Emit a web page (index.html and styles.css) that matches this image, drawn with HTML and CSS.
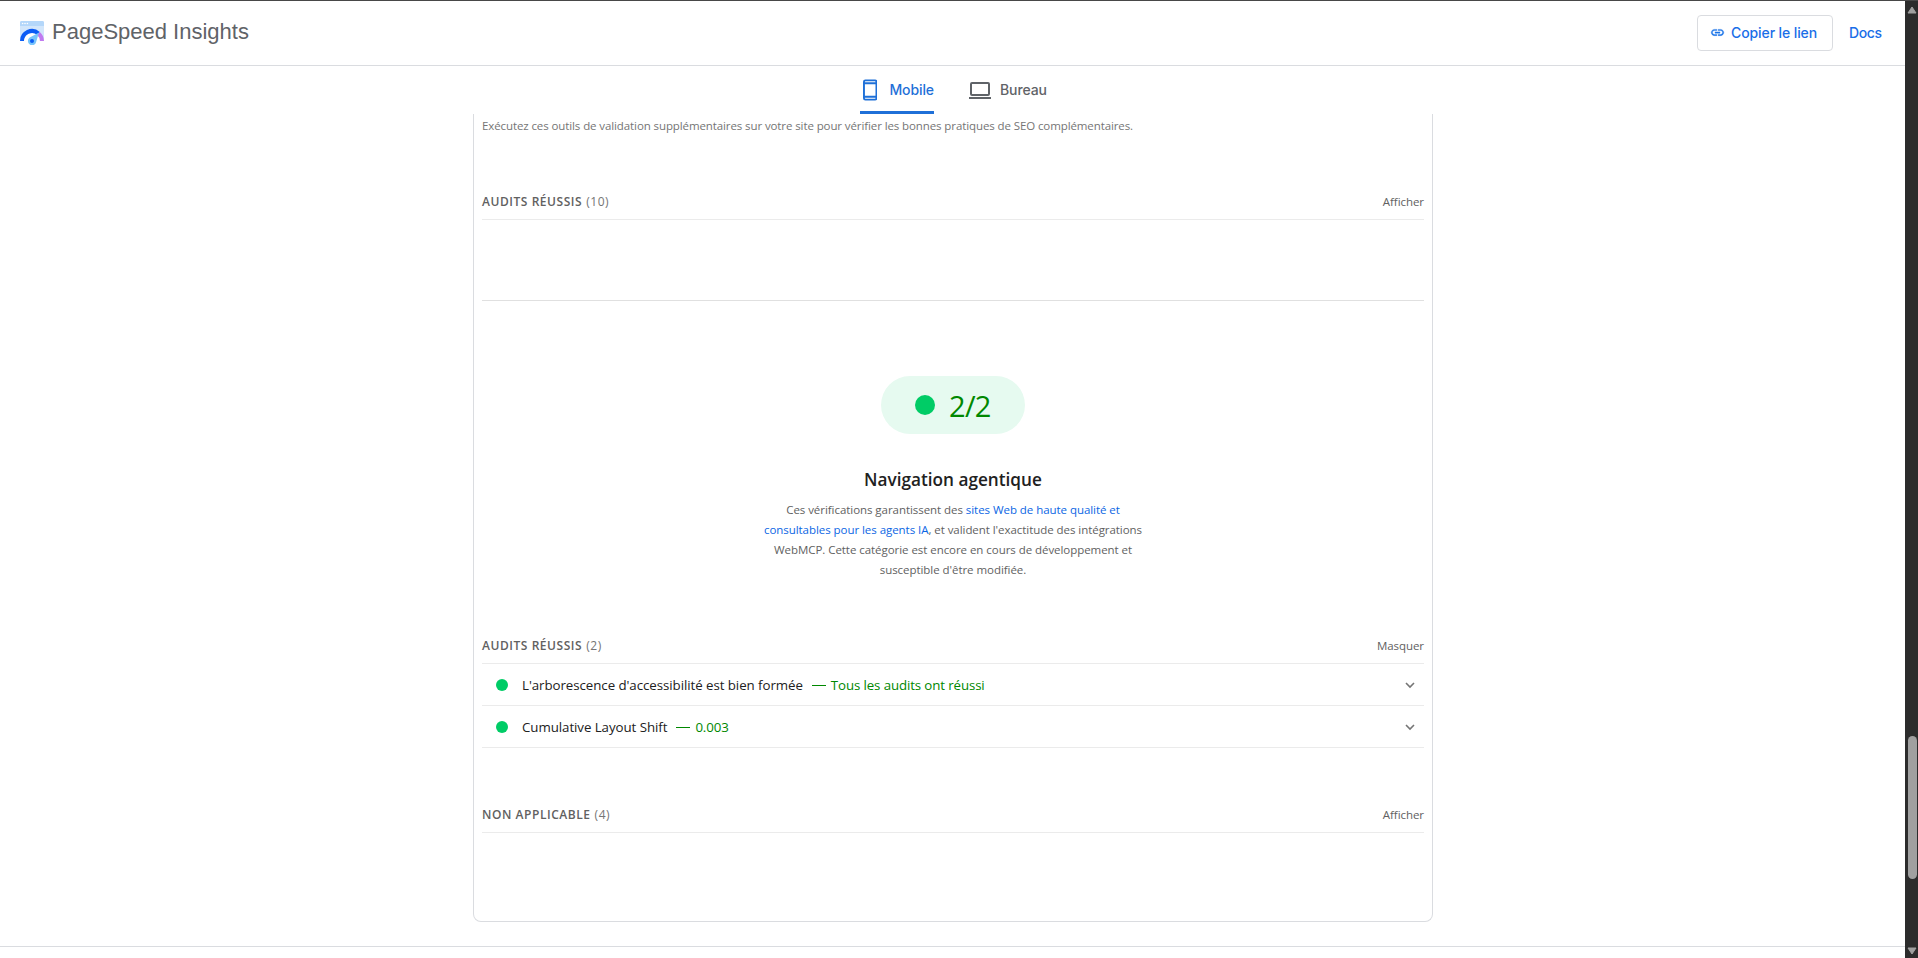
FILE: index.html
```html
<!DOCTYPE html>
<html lang="fr">
<head>
<meta charset="utf-8">
<title>PageSpeed Insights</title>
<link rel="stylesheet" href="styles.css">
</head>
<body>
<div class="page">
  <header class="topbar">
    <div class="brand">
      <svg class="logo" width="24" height="24" viewBox="0 0 24 24">
        <path d="M1.500 0h21A1.500 1.500 0 0 1 24 1.500V20H0V1.500A1.500 1.500 0 0 1 1.500 0z" fill="#d2e6fb"/>
        <path d="M1.500 0h21A1.500 1.500 0 0 1 24 1.500V5H0V1.500A1.500 1.500 0 0 1 1.500 0z" fill="#b4d7fa"/>
        <circle cx="2.600" cy="2.500" r=".8" fill="#fff"/><circle cx="5" cy="2.500" r=".8" fill="#fff"/><circle cx="7.400" cy="2.500" r=".8" fill="#fff"/>
        <path d="M4 20a8 8 0 0 1 16 0z" fill="#fff"/>
        <path d="M2 20a10 10 0 0 1 16.500-7.600" fill="none" stroke="#0b5cf5" stroke-width="4"/>
        <path d="M18.500 12.400A10 10 0 0 1 22 20" fill="none" stroke="#c07af0" stroke-width="4"/>
        <path d="M19 11.500l-2.800 9.300a4.200 4.200 0 1 1-6.500-4.200z" fill="#78c5fb"/>
        <circle cx="12" cy="20" r="2" fill="#0b5cf5"/>
      </svg>
      <span class="brand-name">PageSpeed Insights</span>
    </div>
    <div class="actions">
      <button class="copy">
        <svg width="15" height="15" viewBox="0 0 24 24"><path fill="#1a73e8" stroke="#1a73e8" stroke-width=".6" d="M3.900 12c0-1.710 1.390-3.100 3.100-3.100h4V7H7c-2.760 0-5 2.240-5 5s2.240 5 5 5h4v-1.900H7c-1.710 0-3.100-1.390-3.100-3.100zM8 13h8v-2H8v2zm9-6h-4v1.900h4c1.710 0 3.100 1.390 3.100 3.100s-1.390 3.100-3.100 3.100h-4V17h4c2.760 0 5-2.240 5-5s-2.240-5-5-5z"/></svg>
        <span>Copier le lien</span>
      </button>
      <a class="docs">Docs</a>
    </div>
  </header>
  <nav class="tabs">
    <div class="tab tab-active">
      <svg width="15" height="22" viewBox="0 0 15 22"><rect x="1" y="1" width="13" height="20" rx="1.500" fill="none" stroke="#1f70d8" stroke-width="2"/><path d="M1 4h13M1 18h13" stroke="#1f70d8" stroke-width="2"/></svg>
      <span>Mobile</span>
    </div>
    <div class="tab">
      <svg width="22" height="18" viewBox="0 0 22 18"><rect x="2" y="2" width="18" height="12" rx="1" fill="none" stroke="#5f6368" stroke-width="2"/><path d="M0 17h22" stroke="#5f6368" stroke-width="2"/></svg>
      <span>Bureau</span>
    </div>
  </nav>
  <main class="card">
    <p class="seo-note">Exécutez ces outils de validation supplémentaires sur votre site pour vérifier les bonnes pratiques de SEO complémentaires.</p>
    <div class="clump clump-seo"><span><span class="clump-title">AUDITS RÉUSSIS</span> <span class="count">(10)</span></span><span class="toggle">Afficher</span></div>
    <section class="category">
      <div class="pill"><i class="dot dot-big"></i><span>2/2</span></div>
      <h2 class="title">Navigation agentique</h2>
      <p class="desc">Ces vérifications garantissent des <a>sites Web de haute qualité et</a><br><a>consultables pour les agents IA</a>, et valident l'exactitude des intégrations<br>WebMCP. Cette catégorie est encore en cours de développement et<br>susceptible d'être modifiée.</p>
      <div class="clump"><span><span class="clump-title">AUDITS RÉUSSIS</span> <span class="count">(2)</span></span><span class="toggle">Masquer</span></div>
      <div class="audit"><i class="dot"></i><span>L'arborescence d'accessibilité est bien formée</span><span class="result">Tous les audits ont réussi</span><svg class="chevron" width="10" height="7" viewBox="0 0 10 7"><path d="M1 1l4 4 4-4" fill="none" stroke="#757575" stroke-width="1.600"/></svg></div>
      <div class="audit"><i class="dot"></i><span>Cumulative Layout Shift</span><span class="result">0.003</span><svg class="chevron" width="10" height="7" viewBox="0 0 10 7"><path d="M1 1l4 4 4-4" fill="none" stroke="#757575" stroke-width="1.600"/></svg></div>
      <div class="clump clump-na"><span><span class="clump-title">NON APPLICABLE</span> <span class="count">(4)</span></span><span class="toggle">Afficher</span></div>
    </section>
  </main>
  <footer class="footer"></footer>
</div>
<aside class="scrollbar">
  <svg width="10" height="8" viewBox="0 0 10 8"><path d="M5 1L9 7H1z" fill="#a0a0a0" stroke="#a0a0a0" stroke-linejoin="round"/></svg>
  <div class="thumb"></div>
  <svg width="10" height="8" viewBox="0 0 10 8"><path d="M5 7L9 1H1z" fill="#a0a0a0" stroke="#a0a0a0" stroke-linejoin="round"/></svg>
</aside>
</body>
</html>
```
FILE: styles.css
```css
* { box-sizing: border-box; }
body {
  margin: 0;
  height: 958px;
  display: flex;
  overflow: hidden;
  background: #fff;
  border-top: 1px solid #474747;
  font-family: "Open Sans", "Noto Sans", sans-serif;
  color: #212121;
}
.page { flex: 1; display: flex; flex-direction: column; }
.topbar {
  height: 65px;
  flex: none;
  display: flex;
  justify-content: space-between;
  padding: 14px 24px 0 20px;
  border-bottom: 1px solid #dadce0;
}
.brand { display: flex; gap: 8px; }
.logo { margin-top: 6px; }
.brand-name { font: 22px/34px "Liberation Sans", Arial, sans-serif; color: #5f6368; }
.actions { display: flex; gap: 16px; font: 500 14px/35px Inter, sans-serif; letter-spacing: -.1px; }
.copy {
  display: flex;
  align-items: center;
  gap: 6px;
  width: 136px;
  height: 36px;
  padding: 0 0 1px 12px;
  border: 1px solid #dadce0;
  border-radius: 4px;
  background: #fff;
  font: inherit;
  letter-spacing: inherit;
  color: #1a6ee8;
  white-space: nowrap;
}
.docs { color: #1a6ee8; line-height: 36px; width: 32px; letter-spacing: -.4px; }
.tabs {
  height: 48px;
  flex: none;
  display: flex;
  gap: 35px;
  padding-left: 860px;
  font: 500 14px/48px Inter, sans-serif;
  letter-spacing: -.1px;
  color: #5f6368;
}
.tab { display: flex; align-items: center; height: 48px; gap: 9px; }
.tab-active {
  width: 74px;
  padding: 3px 0 0 3px;
  gap: 12px;
  color: #1f70d8;
  border-bottom: 3px solid #1f70d8;
  border-radius: 2px 2px 0 0;
}
.card {
  width: 960px;
  height: 808px;
  flex: none;
  margin-left: 473px;
  padding: 0 8px;
  border: 1px solid #dadce0;
  border-top: 0;
  border-radius: 0 0 8px 8px;
  font-size: 11.5px;
}
.seo-note { margin: 0; height: 64px; line-height: 24px; color: #757575; white-space: nowrap; letter-spacing: -.1px; }
.clump {
  display: flex;
  justify-content: space-between;
  height: 42px;
  line-height: 48px;
  border-bottom: 1px solid #ebebeb;
  color: #616161;
}
.clump-title { font-size: 12px; font-weight: 600; letter-spacing: .55px; }
.count { margin-left: 1px; font-size: 12px; color: #757575; letter-spacing: .5px; }
.toggle { letter-spacing: -.05px; }
.clump-seo { margin-bottom: 80px; }
.category { border-top: 1px solid #e0e0e0; display: flex; flex-direction: column; }
.pill {
  align-self: center;
  width: 144px;
  height: 58px;
  margin-top: 75px;
  padding-left: 34px;
  display: flex;
  align-items: center;
  gap: 14px;
  border-radius: 29px;
  background: #e6faf0;
  font-size: 29px;
  letter-spacing: -.7px;
  color: #080;
}
.dot { flex: none; width: 12px; height: 12px; border-radius: 50%; background: #0c6; }
.dot-big { width: 20px; height: 20px; }
.title { margin: 34px 0 8px; font-size: 17.2px; line-height: 24px; font-weight: 600; text-align: center; }
.desc { margin: 0; line-height: 20px; height: 122px; color: #616161; text-align: center; white-space: nowrap; letter-spacing: -.05px; }
.desc a { color: #0b66e4; }
.audit {
  display: flex;
  align-items: center;
  height: 42px;
  padding: 0 9px 0 14px;
  border-bottom: 1px solid #ebebeb;
  font-size: 13.3px;
  letter-spacing: -.06px;
}
.audit .dot { margin-right: 14px; }
.result { display: flex; align-items: center; margin-left: 9px; color: #080; letter-spacing: -.12px; }
.result::before { content: ""; width: 14px; height: 1px; margin: 2px 5px 0 0; background: #080; }
.chevron { margin: 1px 0 0 auto; }
.clump-na { margin-top: 43px; }
.footer { margin-top: 24px; border-top: 1px solid #dadce0; flex: 1; }
.scrollbar {
  width: 13px;
  padding: 5px 0 3px 2px;
  display: flex;
  flex-direction: column;
  background: #2c2c2c;
}
.thumb { width: 9px; height: 143px; margin: 722px 0 auto 1px; border-radius: 5px; background: #a0a0a0; }
```
